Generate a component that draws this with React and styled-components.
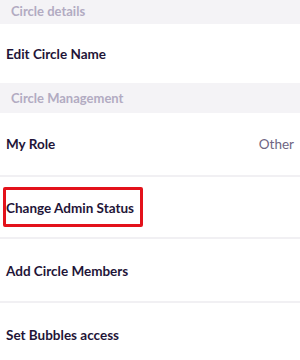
import React from "react";
import styled, { createGlobalStyle } from "styled-components";

const Global = createGlobalStyle`
  html, body { margin: 0; padding: 0; background: #ffffff; }
  body { font-family: Lato, "Noto Sans", sans-serif; -webkit-font-smoothing: antialiased; }
`;

const Page = styled.div`
  width: 300px;
  height: 360px;
  overflow: hidden;
  display: flex;
  flex-direction: column;
  background: #ffffff;
`;

const SectionHeader = styled.div`
  flex: none;
  height: ${(p) => p.$h}px;
  display: flex;
  align-items: center;
  padding-left: 11px;
  padding-bottom: ${(p) => p.$pb || 0}px;
  box-sizing: border-box;
  background: #f4f3f6;
  color: #b2abc2;
  font-size: 13px;
  font-weight: 700;
`;

const Row = styled.div`
  flex: none;
  height: ${(p) => p.$h}px;
  display: flex;
  align-items: center;
  justify-content: space-between;
  padding: 0 6px;
  padding-top: ${(p) => p.$pt || 0}px;
  box-sizing: border-box;
  border-bottom: ${(p) => (p.$divider ? "2px solid #f1f0f3" : "none")};
`;

const Title = styled.span`
  color: #1f1538;
  font-size: 13.5px;
  font-weight: 700;
`;

const Highlight = styled.span`
  display: inline-block;
  margin-left: -3px;
  padding: 7px 6px 8px 0;
  border: 3px solid #e3121b;
  border-radius: 2px;
`;

const Value = styled.span`
  color: #6e6583;
  font-size: 13.5px;
  font-weight: 400;
`;

export default function App() {
  return (
    <Page>
      <Global />
      <SectionHeader $h={24} $pb={2}>Circle details</SectionHeader>
      <Row $h={59}>
        <Title>Edit Circle Name</Title>
      </Row>
      <SectionHeader $h={30}>Circle Management</SectionHeader>
      <Row $h={64} $divider>
        <Title>My Role</Title>
        <Value>Other</Value>
      </Row>
      <Row $h={62} $divider>
        <Highlight>
          <Title>Change Admin Status</Title>
        </Highlight>
      </Row>
      <Row $h={64} $divider $pt={2}>
        <Title>Add Circle Members</Title>
      </Row>
      <Row $h={62} $pt={2}>
        <Title>Set Bubbles access</Title>
      </Row>
    </Page>
  );
}
